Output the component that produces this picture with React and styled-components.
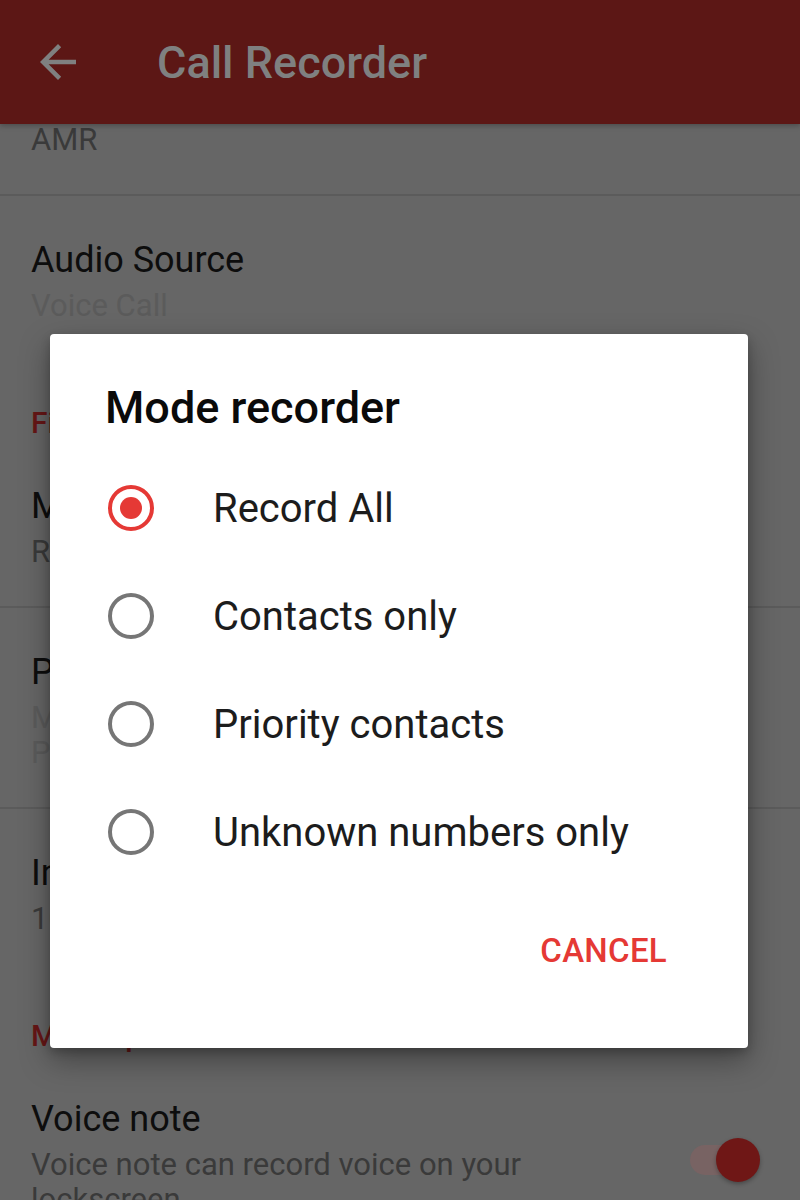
import React from 'react';
import styled, {createGlobalStyle} from 'styled-components';

const GlobalStyle = createGlobalStyle`
    html, body{
        margin: 0;
        padding: 0;
        background: #666666;
    }
    *{
        box-sizing: border-box;
    }
`;

const Screen = styled.div`
    position: relative;
    width: 800px;
    height: 1200px;
    overflow: hidden;
    background: #666666;
    font-family: Roboto, "Noto Sans", sans-serif;
`;

const AppBar = styled.div`
    position: relative;
    z-index: 2;
    display: flex;
    align-items: center;
    height: 124px;
    padding: 0 0 0 31px;
    background: #5c1715;
    box-shadow: 0 2px 5px rgba(0, 0, 0, 0.25);

    svg{
        display: block;
    }

    h1{
        margin: 0 0 0 72px;
        font-size: 45px;
        font-weight: 500;
        color: #7f8080;
    }
`;

const Content = styled.div`
    height: 1076px;
    overflow: hidden;
`;

// list is scrolled: first item's title sits under the app bar
const List = styled.div`
    margin-top: -94px;
`;

const Item = styled.div`
    display: flex;
    align-items: flex-start;
    justify-content: space-between;
    padding: 42px 31px 37px 31px;
    border-bottom: ${props => props.divider ? '2px solid #5b5b5b' : 'none'};
`;

const ItemText = styled.div`
    display: flex;
    flex-direction: column;
    max-width: ${props => props.narrow ? '530px' : 'none'};
`;

const Title = styled.div`
    font-size: 36px;
    line-height: 44px;
    color: #0d0d0d;
`;

const Summary = styled.div`
    margin-top: ${props => props.follow ? '0' : '6px'};
    font-size: 31px;
    line-height: 35px;
    color: ${props => props.disabled ? '#5b5b5b' : '#3a3a3a'};
`;

const Category = styled.div`
    padding: 45px 31px 2px 31px;
    font-size: 30px;
    line-height: 35px;
    font-weight: 500;
    color: #661616;
`;

const Switch = styled.div`
    position: relative;
    flex-shrink: 0;
    width: 70px;
    height: 44px;
    margin-top: 41px;
    margin-right: 9px;

    .track{
        position: absolute;
        left: 0;
        top: 7px;
        width: 52px;
        height: 30px;
        border-radius: 15px;
        background: #786363;
    }

    .thumb{
        position: absolute;
        right: 0;
        top: 0;
        width: 44px;
        height: 44px;
        border-radius: 50%;
        background: #6f1716;
        box-shadow: 0 2px 4px rgba(0, 0, 0, 0.3);
    }
`;

const Dialog = styled.div`
    position: absolute;
    z-index: 3;
    left: 50px;
    top: 334px;
    width: 698px;
    height: 714px;
    background: #ffffff;
    border-radius: 4px;
    box-shadow: 0 12px 30px rgba(0, 0, 0, 0.35), 0 4px 10px rgba(0, 0, 0, 0.2);
    display: flex;
    flex-direction: column;
`;

const DialogTitle = styled.h2`
    margin: 0;
    padding: 51px 0 23px 55px;
    font-size: 45px;
    line-height: 46px;
    font-weight: 500;
    color: #0a0a0a;
`;

const Options = styled.div`
    display: flex;
    flex-direction: column;
`;

const Option = styled.div`
    display: flex;
    align-items: center;
    height: 108px;
    padding-left: 58px;
    gap: 59px;
    font-size: 40px;
    color: #1c1c1c;
`;

const Radio = styled.div`
    position: relative;
    width: 46px;
    height: 46px;
    border-radius: 50%;
    border: 4px solid ${props => props.checked ? '#e53935' : '#767676'};
    flex-shrink: 0;

    &::after{
        content: '';
        display: ${props => props.checked ? 'block' : 'none'};
        position: absolute;
        left: 8px;
        top: 8px;
        width: 22px;
        height: 22px;
        border-radius: 50%;
        background: #e53935;
    }
`;

const Actions = styled.div`
    display: flex;
    justify-content: flex-end;
    padding: 32px 66px 0 0;
`;

const TextButton = styled.div`
    height: 64px;
    display: flex;
    align-items: center;
    padding: 0 15px;
    font-size: 33px;
    font-weight: 500;
    color: #e53935;
    letter-spacing: 0.3px;
`;

const BackArrow = () => (
    <svg width="54" height="54" viewBox="0 0 24 24">
        <path d="M20 11H7.83l5.59-5.59L12 4l-8 8 8 8 1.41-1.41L7.83 13H20v-2z" fill="#7f8080"/>
    </svg>
);

const modes = ['Record All', 'Contacts only', 'Priority contacts', 'Unknown numbers only'];

export default function App(){
    return(
        <Screen>
            <GlobalStyle/>
            <AppBar>
                <BackArrow/>
                <h1>Call Recorder</h1>
            </AppBar>
            <Content>
                <List>
                    <Item divider>
                        <ItemText>
                            <Title>Audio Format</Title>
                            <Summary>AMR</Summary>
                        </ItemText>
                    </Item>
                    <Item>
                        <ItemText>
                            <Title>Audio Source</Title>
                            <Summary disabled>Voice Call</Summary>
                        </ItemText>
                    </Item>
                    <Category>Filter</Category>
                    <Item divider>
                        <ItemText>
                            <Title>Mode recorder</Title>
                            <Summary>Record All</Summary>
                        </ItemText>
                    </Item>
                    <Item divider>
                        <ItemText>
                            <Title>Priority contacts</Title>
                            <Summary disabled>Manage contacts to record</Summary>
                            <Summary disabled follow>Priority mode only</Summary>
                        </ItemText>
                    </Item>
                    <Item>
                        <ItemText>
                            <Title>Inbox size</Title>
                            <Summary>100 recordings</Summary>
                        </ItemText>
                    </Item>
                    <Category>More options</Category>
                    <Item>
                        <ItemText narrow>
                            <Title>Voice note</Title>
                            <Summary>Voice note can record voice on your lockscreen</Summary>
                        </ItemText>
                        <Switch>
                            <div className="track"/>
                            <div className="thumb"/>
                        </Switch>
                    </Item>
                </List>
            </Content>
            <Dialog>
                <DialogTitle>Mode recorder</DialogTitle>
                <Options>
                    {modes.map((mode, i)=>(
                        <Option key={mode}>
                            <Radio checked={i === 0}/>
                            <span>{mode}</span>
                        </Option>
                    ))}
                </Options>
                <Actions>
                    <TextButton>CANCEL</TextButton>
                </Actions>
            </Dialog>
        </Screen>
    )
}
